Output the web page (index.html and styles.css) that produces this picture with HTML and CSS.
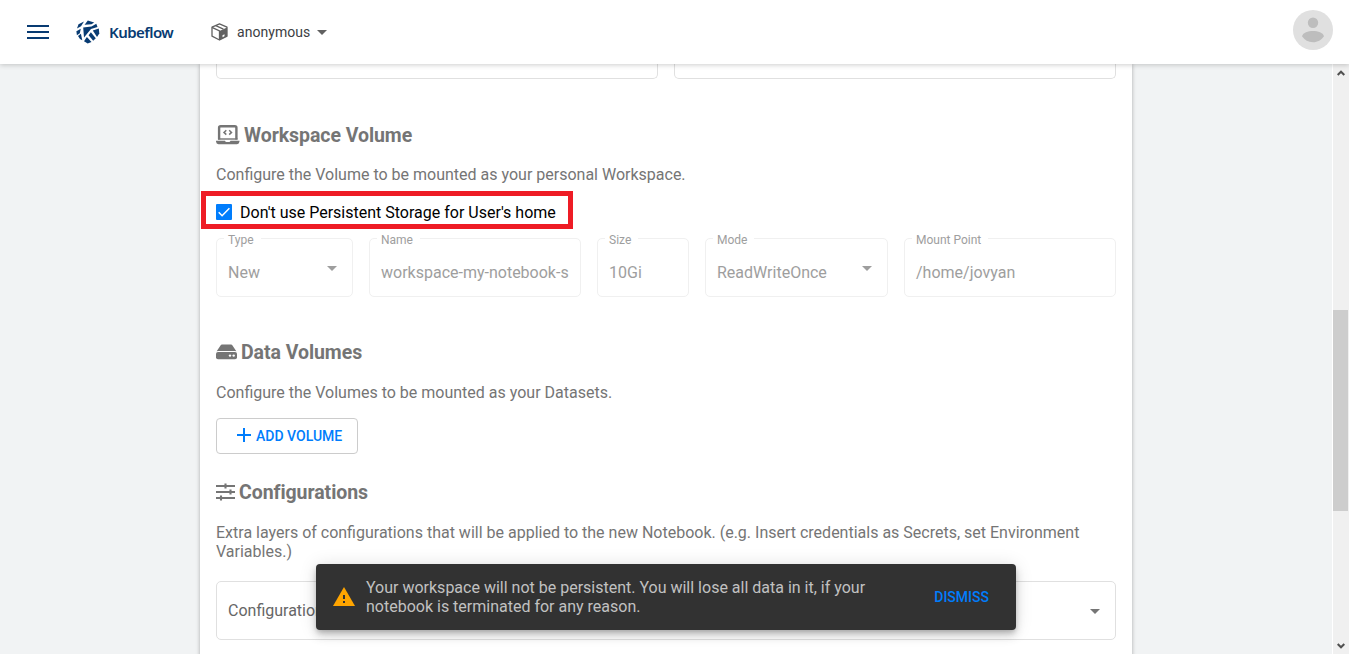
FILE: index.html
```html
<!DOCTYPE html>
<html lang="en">
<head>
<meta charset="utf-8">
<title>Kubeflow</title>
<link rel="stylesheet" href="styles.css">
</head>
<body>
<header class="topbar">
  <svg class="menu" width="22" height="16" viewBox="0 0 22 16"><path d="M0 1h22v2H0zM0 7h22v2H0zM0 13h22v2H0z" fill="#083b72"/></svg>
  <div class="brand">
    <svg width="24" height="24" viewBox="0 0 24 24">
      <g fill="#083b72">
        <path d="M1 8.400 2.500 4.200 8 1.500 5 6.300z"/>
        <path d="M8.600 4.800 11.800.5 18.200 2.600 15.500 4.200z"/>
        <path d="M7.200 7.600 15.500 6.600 20.300 3.800 21.500 6.900 15 9 8 17.500z"/>
        <path d="M.4 11.200 4.800 8.800 3.800 13.300.9 15.200z"/>
        <path d="M4.900 13.700 6.300 20.300 4 19 2 16z"/>
        <path d="M16.800 10.400 22.800 8.600 23.300 13.600 21 17z"/>
        <path d="M14.900 12.300 19.800 18.300 17.200 20.800 12.600 15.200z"/>
        <path d="M10.900 17 15.500 22 11.700 23.500 8 21.300z"/>
      </g>
    </svg>
    <span class="brand-name">Kubeflow</span>
  </div>
  <div class="namespace">
    <svg width="17" height="18" viewBox="0 0 17 18">
      <path d="M8.5.8 16 4.2v9L8.5 17 1 13.2v-9z" fill="#fff" stroke="#616161" stroke-width="1.3" stroke-linejoin="round"/>
      <path d="M8.5 8 16 4.5v8.8L8.5 17z" fill="#616161"/>
      <path d="M1 4.400 8.500 8v9M4.800 2.600l7.600 3.600" fill="none" stroke="#616161" stroke-width="1.300"/>
      <path d="M11.500 12.300l2-1v2l-2 1z" fill="#fff"/>
    </svg>
    <span>anonymous</span>
    <i class="caret"></i>
  </div>
  <svg class="avatar" width="40" height="40" viewBox="0 0 40 40"><circle cx="20" cy="20" r="20" fill="#e0e0e0"/><circle cx="20" cy="12.8" r="5.2" fill="#bdbdbd"/><path d="M9 26.2c1-3.6 6-5.2 11-5.2s10 1.600 11 5.200C28.500 30 24.600 32.200 20 32.200S11.500 30 9 26.200z" fill="#bdbdbd"/></svg>
</header>
<div class="viewport">
  <main class="page">
    <div class="card">
      <div class="row previous"><div class="cut"></div><div class="cut"></div></div>

      <h3 class="title laptop-title">
        <svg width="24" height="20" viewBox="0 0 24 20"><path d="M3.100 14.500V2.800Q3.100 1.200 4.700 1.200h14.100q1.600 0 1.600 1.600v11.700" fill="none" stroke="#757575" stroke-width="2.400"/><path d="M2 14h19.500" stroke="#757575" stroke-width="1.400"/><path d="M0 15.800h9q.4 1.200 1.400 1.200h2.700q1 0 1.400-1.200H23.500v.8q-.3 2.600-2.500 2.600H2.500Q.2 19.200 0 16.600z" fill="#757575"/><path d="M10.300 5.200 8 7.400l2.300 2.200M13.200 5.200l2.300 2.200-2.300 2.200" fill="none" stroke="#757575" stroke-width="1.500"/></svg>
        <span>Workspace Volume</span>
      </h3>
      <p class="text workspace-text">Configure the Volume to be mounted as your personal Workspace.</p>
      <div class="check-row">
        <span class="checkbox"><svg width="16" height="16" viewBox="0 0 16 16"><path d="M2.700 8.200l3.400 3.500 7.300-7.400" fill="none" stroke="#fff" stroke-width="1.500"/></svg></span>
        <span>Don't use Persistent Storage for User's home</span>
        <div class="highlight"></div>
      </div>
      <div class="row fields">
        <div class="field type"><label>Type</label><span>New</span><i class="caret"></i></div>
        <div class="field name"><label>Name</label><span>workspace-my-notebook-s</span></div>
        <div class="field size"><label>Size</label><span>10Gi</span></div>
        <div class="field mode"><label>Mode</label><span>ReadWriteOnce</span><i class="caret"></i></div>
        <div class="field mount"><label>Mount Point</label><span>/home/jovyan</span></div>
      </div>

      <h3 class="title data-title">
        <svg width="21" height="16" viewBox="0 0 21 16"><path d="M4.500 1.500Q5.100.5 6 .5h9q.9 0 1.500 1L20.300 7.300q-.8-.4-1.600-.4H2.300q-.8 0-1.600.4z" fill="#757575"/><path d="M2 8h17q2 0 2 2v3.200q0 2-2 2H2q-2 0-2-2V10q0-2 2-2z" fill="#757575"/><circle cx="14" cy="11.600" r="1.200" fill="#fff"/><circle cx="17.700" cy="11.600" r="1.200" fill="#fff"/></svg>
        <span>Data Volumes</span>
      </h3>
      <p class="text">Configure the Volumes to be mounted as your Datasets.</p>
      <button class="add"><svg width="14" height="14" viewBox="0 0 14 14"><path d="M7 0v14M0 7h14" stroke="#007dfc" stroke-width="2"/></svg>ADD VOLUME</button>

      <h3 class="title config-title">
        <svg width="19" height="18" viewBox="0 0 19 18"><path d="M0 3h19M0 9h19M0 15h19M9.500.5v5M14.500 6.500v5M5 12.500v5" stroke="#757575" stroke-width="2.100"/></svg>
        <span>Configurations</span>
      </h3>
      <p class="text">Extra layers of configurations that will be applied to the new Notebook. (e.g. Insert credentials as Secrets, set Environment Variables.)</p>
      <div class="field config"><span>Configurations</span><i class="caret"></i></div>
    </div>
  </main>
  <div class="scrollbar">
    <svg width="8" height="6" viewBox="0 0 8 6"><path d="M.7 5 4 1.700 7.300 5" fill="none" stroke="#505050" stroke-width="2"/></svg>
    <div class="thumb"></div>
    <svg class="down" width="8" height="6" viewBox="0 0 8 6"><path d="M.7 1 4 4.300 7.300 1" fill="none" stroke="#505050" stroke-width="2"/></svg>
  </div>
</div>
<div class="snackbar">
  <svg class="warning" width="22" height="19" viewBox="0 0 22 19"><path d="M11 0 22 19H0z" fill="#ffa500"/><path d="M10 8h2v4h-2zM10 14h2v2h-2z" fill="#323232"/></svg>
  <span class="message">Your workspace will not be persistent. You will lose all data in it, if your notebook is terminated for any reason.</span>
  <span class="dismiss">DISMISS</span>
</div>
</body>
</html>
```

FILE: styles.css
```css
* { box-sizing: border-box; }
body {
  margin: 0;
  height: 654px;
  overflow: hidden;
  display: flex;
  flex-direction: column;
  font: 16px/19px Roboto, sans-serif;
  background: #f1f3f4;
}
.topbar {
  flex: 0 0 64px;
  display: flex;
  align-items: center;
  padding: 0 16px 0 27px;
  background: #fff;
  box-shadow: 0 1px 5px rgba(0, 0, 0, .2);
  position: relative;
  z-index: 2;
}
.brand { display: flex; align-items: center; margin-left: 27px; width: 135px; }
.brand-name {
  margin-left: 9px;
  font: 600 15px/20px "Noto Sans", sans-serif;
  letter-spacing: -.55px;
  color: #083b72;
}
.namespace { display: flex; align-items: center; font-size: 14px; color: #3c4043; }
.namespace span { margin-left: 9px; width: 73px; letter-spacing: .04px; }
.namespace .caret { margin-left: 7px; }
.caret {
  border: 5px solid transparent;
  border-top-color: currentColor;
  border-bottom: 0;
  color: #616161;
}
.avatar { margin: 0 0 4px auto; }
.viewport { flex: 1; min-height: 0; display: flex; }
.page { flex: 1; display: flex; justify-content: center; overflow: hidden; }
.card {
  width: 932px;
  height: 650px;
  flex: none;
  padding: 0 16px;
  background: #fff;
  box-shadow: 0 0 4px rgba(0, 0, 0, .3);
}
.row { display: flex; gap: 16px; }
.cut { flex: 1; height: 15px; border: 1px solid #e0e0e0; border-top: 0; border-radius: 0 0 5px 5px; }
.title {
  display: flex;
  align-items: center;
  height: 24px;
  margin: 0 0 19px;
  font-size: 19.5px;
  line-height: 24px;
  font-weight: 700;
  letter-spacing: -.06px;
  color: #757575;
}
.title svg { flex: none; margin-right: 4px; }
.title span { padding-top: 1px; }
.laptop-title { margin: 44px 0 18px; }
.data-title { margin-top: 43px; }
.config-title { margin-top: 26px; }
.text { margin: 0; color: #757575; }
.check-row { position: relative; display: flex; align-items: center; gap: 8px; height: 24px; margin: 16px 0 14px; color: #000; }
.checkbox { width: 16px; height: 16px; border-radius: 1px; background: #007dfc; }
.checkbox svg { display: block; }
.highlight { position: absolute; left: -15px; top: -9px; width: 372px; height: 38px; border: 5px solid #ee1c25; }
.field {
  position: relative;
  display: flex;
  align-items: center;
  height: 59px;
  padding: 9px 11px 0;
  border: 1px solid #f0f0f0;
  border-radius: 5px;
  color: #9e9e9e;
}
.field label {
  position: absolute;
  left: 7px;
  top: -8px;
  padding: 0 7px 0 4px;
  font-size: 12px;
  line-height: 18px;
  background: #fff;
}
.field .caret { margin: 0 4px 7px auto; color: #9e9e9e; }
.type { width: 137px; }
.name { width: 212px; }
.size { width: 92px; }
.mode { width: 183px; }
.mount { width: 212px; }
.add {
  display: flex;
  align-items: center;
  gap: 5px;
  width: 142px;
  height: 36px;
  margin-top: 16px;
  padding: 0 0 0 20px;
  border: 1px solid #ccc;
  border-radius: 4px;
  background: #fff;
  color: #007dfc;
  font: 500 14px/34px Roboto, sans-serif;
}
.add svg { margin-bottom: 2px; }
.config { margin-top: 20px; padding-top: 0; border-color: #e0e0e0; color: #666; }
.config .caret { margin: 2px 4px 0 auto; color: #757575; }
.scrollbar {
  width: 17px;
  display: flex;
  flex-direction: column;
  padding: 6px 0 5px;
  background: #f0f0f0;
  border-left: 1px solid #fff;
}
.scrollbar svg { margin-left: 4px; flex: none; }
.thumb { width: 15px; height: 201px; margin-top: 234px; background: #cdcdcd; }
.scrollbar .down { margin-top: auto; }
.snackbar {
  position: absolute;
  left: 316px;
  top: 564px;
  z-index: 3;
  display: flex;
  align-items: center;
  width: 700px;
  height: 66px;
  padding: 0 27px 0 17px;
  border-radius: 4px;
  background: #323232;
  color: #c1c1c1;
  box-shadow: 0 3px 5px -1px rgba(0, 0, 0, .2), 0 6px 10px rgba(0, 0, 0, .14), 0 1px 18px rgba(0, 0, 0, .12);
}
.warning { margin-bottom: 1px; }
.message { width: 520px; margin-left: 11px; }
.dismiss { margin-left: auto; color: #007dfc; font-size: 14px; font-weight: 500; }
```
